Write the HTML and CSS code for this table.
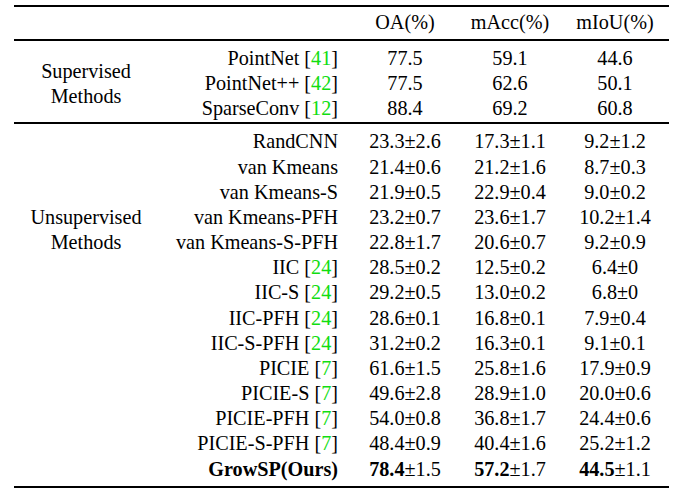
FILE: index.html
```html
<!DOCTYPE html>
<html>
<head>
<meta charset="utf-8">
<link rel="stylesheet" href="styles.css">
</head>
<body>
<div class="table">
  <div class="rule"></div>
  <div class="grid header">
    <div class="c"></div>
    <div class="m"></div>
    <div class="c">OA(%)</div>
    <div class="c">mAcc(%)</div>
    <div class="c">mIoU(%)</div>
  </div>
  <div class="rule"></div>
  <div class="grid section sup">
    <div class="label label-sup">Supervised<br>Methods</div>
    <div class="m">PointNet [<span class="cite">41</span>]</div><div class="c">77.5</div><div class="c">59.1</div><div class="c">44.6</div>
    <div class="m">PointNet++ [<span class="cite">42</span>]</div><div class="c">77.5</div><div class="c">62.6</div><div class="c">50.1</div>
    <div class="m">SparseConv [<span class="cite">12</span>]</div><div class="c">88.4</div><div class="c">69.2</div><div class="c">60.8</div>
  </div>
  <div class="rule"></div>
  <div class="grid section unsup">
    <div class="label label-unsup">Unsupervised<br>Methods</div>
    <div class="m">RandCNN</div><div class="c">23.3±2.6</div><div class="c">17.3±1.1</div><div class="c">9.2±1.2</div>
    <div class="m">van Kmeans</div><div class="c">21.4±0.6</div><div class="c">21.2±1.6</div><div class="c">8.7±0.3</div>
    <div class="m">van Kmeans-S</div><div class="c">21.9±0.5</div><div class="c">22.9±0.4</div><div class="c">9.0±0.2</div>
    <div class="m">van Kmeans-PFH</div><div class="c">23.2±0.7</div><div class="c">23.6±1.7</div><div class="c">10.2±1.4</div>
    <div class="m">van Kmeans-S-PFH</div><div class="c">22.8±1.7</div><div class="c">20.6±0.7</div><div class="c">9.2±0.9</div>
    <div class="m">IIC [<span class="cite">24</span>]</div><div class="c">28.5±0.2</div><div class="c">12.5±0.2</div><div class="c">6.4±0</div>
    <div class="m">IIC-S [<span class="cite">24</span>]</div><div class="c">29.2±0.5</div><div class="c">13.0±0.2</div><div class="c">6.8±0</div>
    <div class="m">IIC-PFH [<span class="cite">24</span>]</div><div class="c">28.6±0.1</div><div class="c">16.8±0.1</div><div class="c">7.9±0.4</div>
    <div class="m">IIC-S-PFH [<span class="cite">24</span>]</div><div class="c">31.2±0.2</div><div class="c">16.3±0.1</div><div class="c">9.1±0.1</div>
    <div class="m">PICIE [<span class="cite">7</span>]</div><div class="c">61.6±1.5</div><div class="c">25.8±1.6</div><div class="c">17.9±0.9</div>
    <div class="m">PICIE-S [<span class="cite">7</span>]</div><div class="c">49.6±2.8</div><div class="c">28.9±1.0</div><div class="c">20.0±0.6</div>
    <div class="m">PICIE-PFH [<span class="cite">7</span>]</div><div class="c">54.0±0.8</div><div class="c">36.8±1.7</div><div class="c">24.4±0.6</div>
    <div class="m">PICIE-S-PFH [<span class="cite">7</span>]</div><div class="c">48.4±0.9</div><div class="c">40.4±1.6</div><div class="c">25.2±1.2</div>
    <div class="m"><b>GrowSP(Ours)</b></div><div class="c"><b>78.4</b>±1.5</div><div class="c"><b>57.2</b>±1.7</div><div class="c"><b>44.5</b>±1.1</div>
  </div>
  <div class="rule"></div>
</div>
</body>
</html>
```

FILE: styles.css
```css
html, body {
  margin: 0;
  padding: 0;
  background: #ffffff;
}

body {
  font-family: "Liberation Serif", "Times New Roman", serif;
  font-size: 20.2px;
  color: #000000;
}

.table {
  margin-left: 14px;
  width: 655px;
  padding-top: 5px;
}

.rule {
  height: 2px;
  background: #000000;
}

.grid {
  display: grid;
  grid-template-columns: 140px 197px 108px 102px 108px;
  line-height: 25.15px;
}

.header {
  height: 32px;
  align-items: center;
}

.section.sup {
  padding-top: 5px;
  padding-bottom: 1px;
}

.section.unsup {
  padding-top: 5px;
  padding-bottom: 4.5px;
}

.m {
  grid-column: 2;
  text-align: right;
  padding-right: 13px;
  white-space: nowrap;
}

.c {
  text-align: center;
  white-space: nowrap;
}

.label {
  grid-column: 1;
  text-align: center;
  padding-left: 4px;
}

.label-sup {
  grid-row: 1 / 4;
  align-self: center;
}

.label-unsup {
  grid-row: 4 / 6;
  align-self: start;
}

.cite {
  color: #11dd11;
}

b {
  font-weight: bold;
}
```
